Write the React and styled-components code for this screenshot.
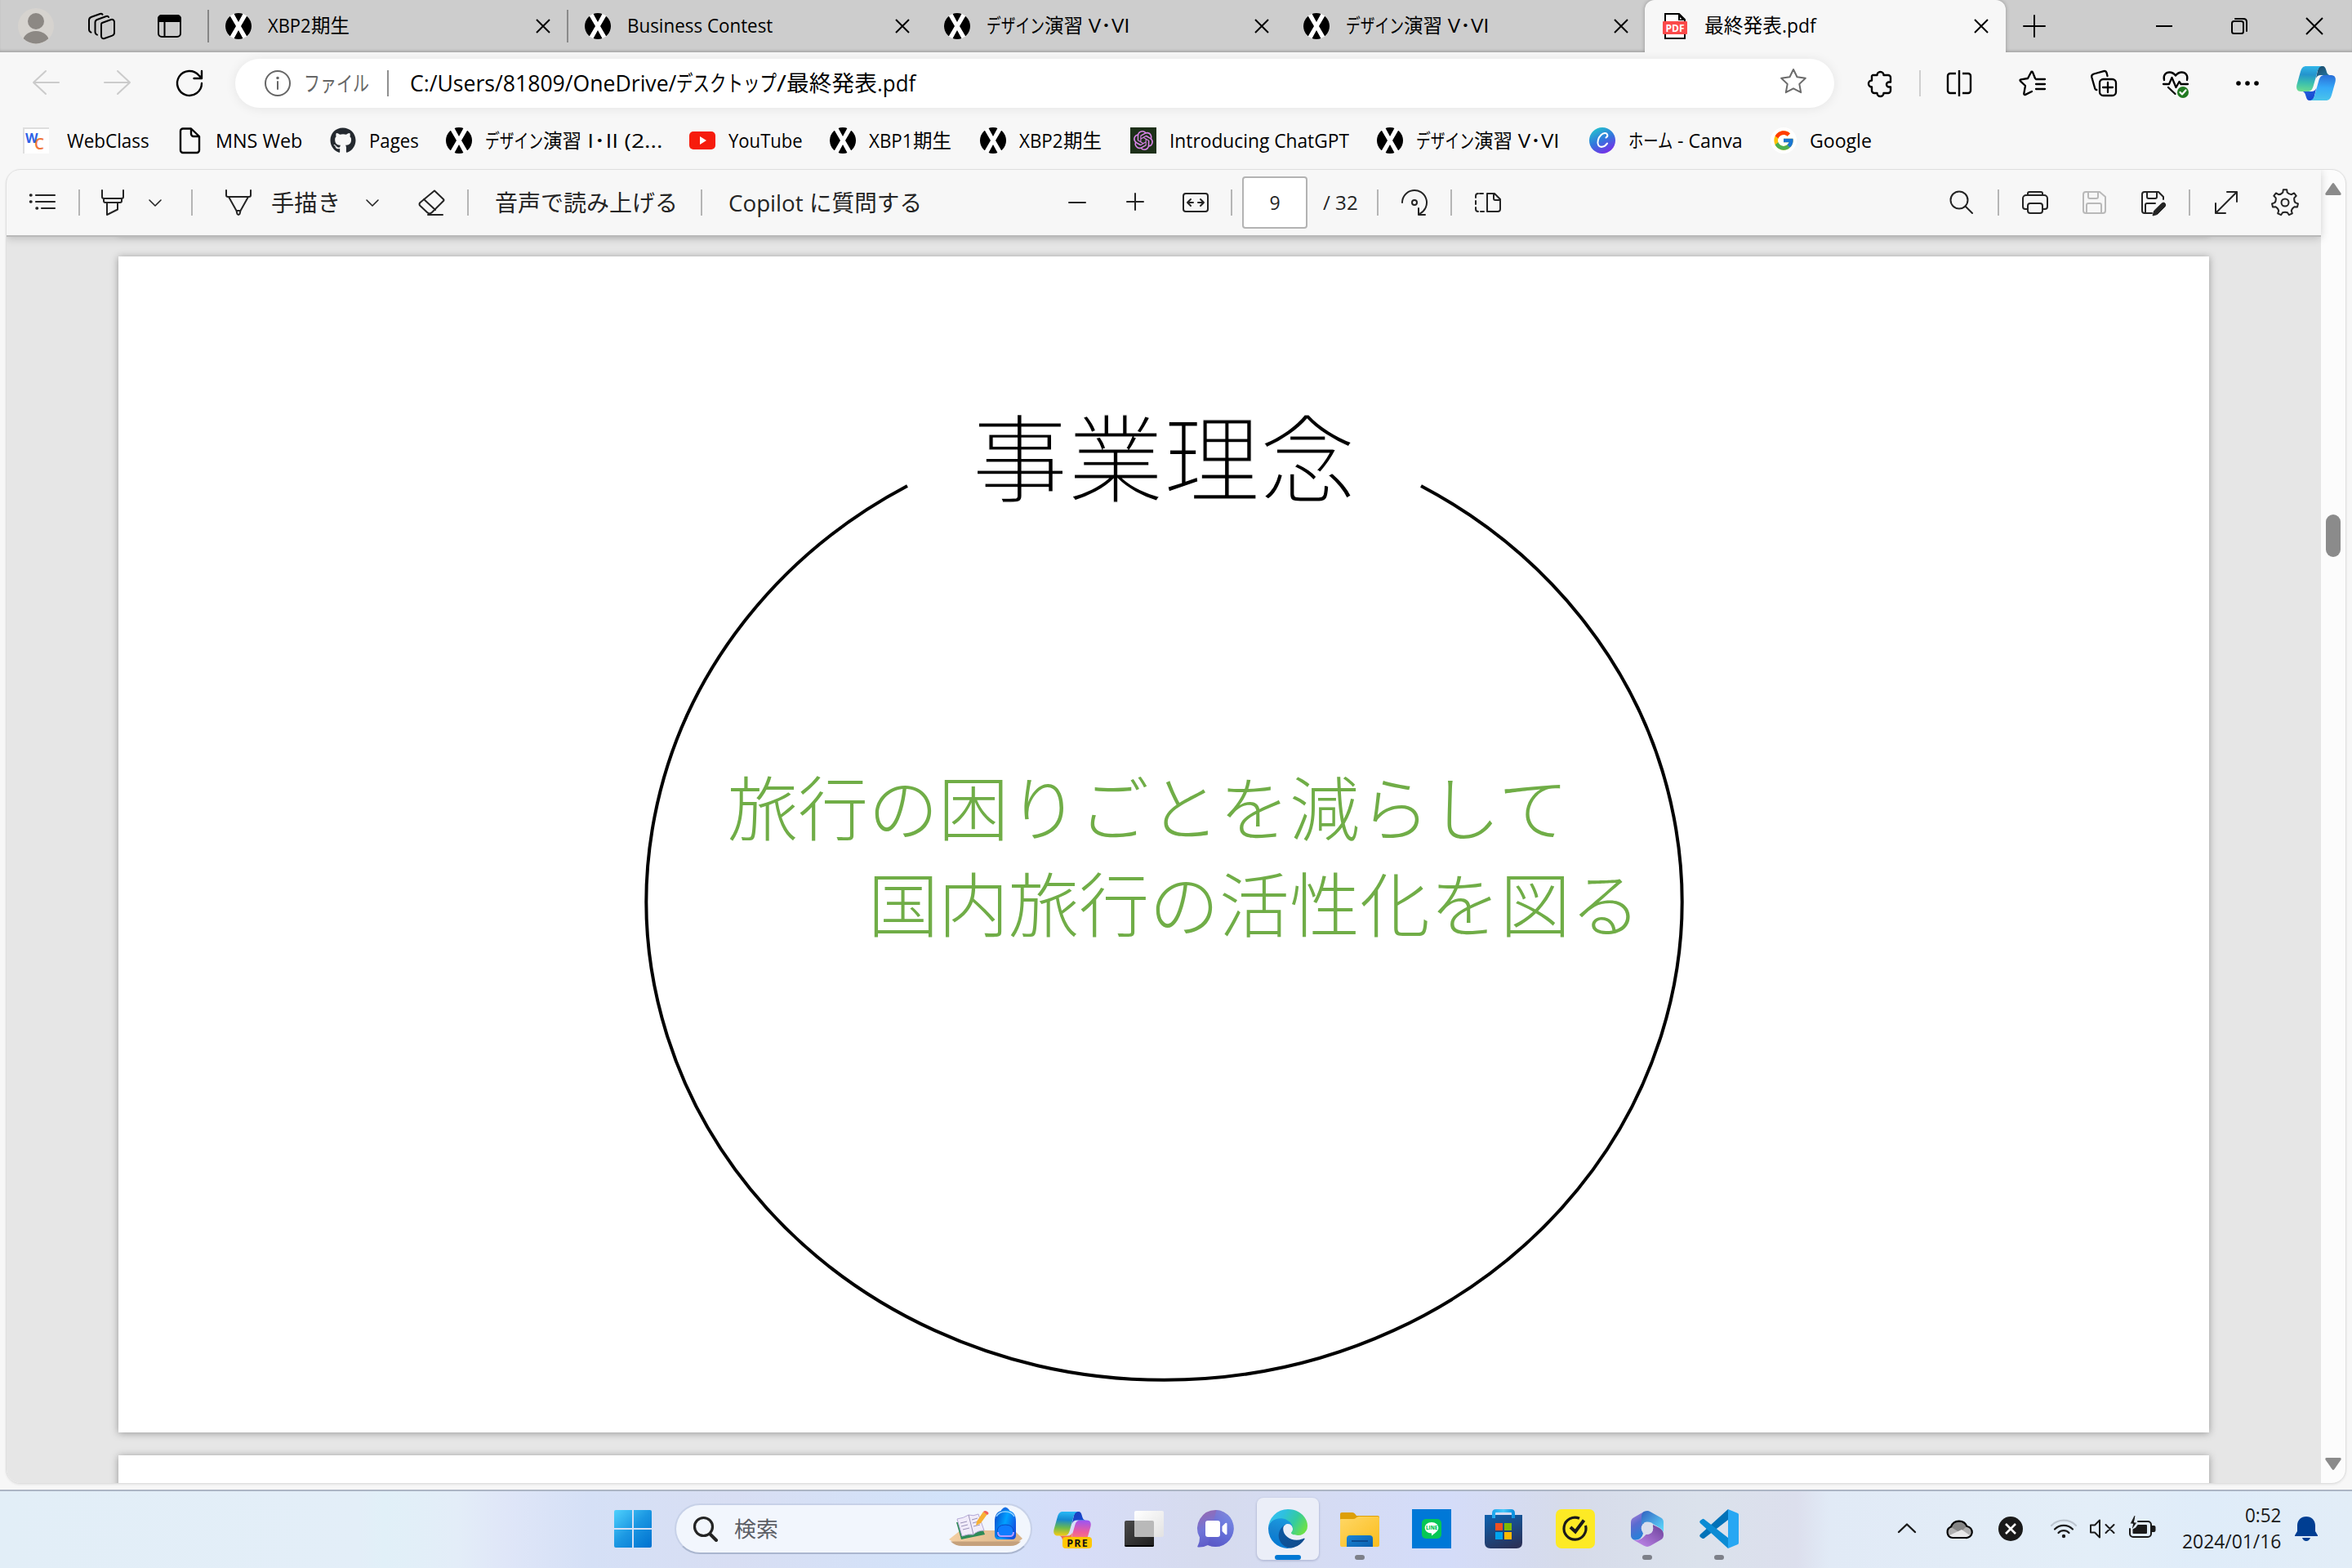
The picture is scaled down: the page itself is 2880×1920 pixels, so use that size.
import React, { useLayoutEffect, useRef, useState } from "react";
import styled, { createGlobalStyle, css } from "styled-components";
import { FaGithub } from "react-icons/fa";
import { SiOpenai } from "react-icons/si";
import { FcGoogle } from "react-icons/fc";

const Global = createGlobalStyle`
  html { height: 1920px; overflow: hidden; }
  * { box-sizing: border-box; }
  body { margin: 0; height: 1920px; background: #f7f7f7; overflow: hidden; }
`;

const uiFont = `"Open Sans", "Noto Sans CJK JP", sans-serif`;

const Screen = styled.div`
  width: 2880px;
  height: 1920px;
  display: flex;
  flex-direction: column;
  background: #f7f7f7;
  color: #000;
  font-family: ${uiFont};
  font-size: 24px;
  overflow: hidden;
`;

/* ---------- text that keeps a set width ---------- */
const TextBox = styled.span`
  display: inline-block;
  flex: none;
  width: ${(p) => p.$w}px;
  margin-left: ${(p) => p.$ml || 0}px;
  white-space: pre;
  line-height: 36px;
  font-size: ${(p) => p.$size || 24}px;
  color: ${(p) => p.$color || "inherit"};
`;
const Run = styled.span`
  display: inline-block;
  transform-origin: 0 50%;
  white-space: pre;
`;

function Fit({ w, children, ...rest }) {
  const ref = useRef(null);
  const [scale, setScale] = useState(1);
  useLayoutEffect(() => {
    const natural = ref.current.offsetWidth;
    if (natural) setScale(w / natural);
  }, [w, children]);
  return (
    <TextBox $w={w} {...rest}>
      <Run ref={ref} style={{ transform: `scaleX(${scale})` }}>{children}</Run>
    </TextBox>
  );
}

const Runs = styled.span`
  display: flex;
  flex: none;
  margin-left: ${(p) => p.$ml || 0}px;
`;
function Label({ parts, ml, size, color }) {
  return (
    <Runs $ml={ml}>
      {parts.map(([t, w], i) => (
        <Fit key={i} w={w} $size={size} $color={color}>{t}</Fit>
      ))}
    </Runs>
  );
}

/* ---------- shared pieces ---------- */
const IconBox = styled.span`
  display: flex;
  align-items: center;
  justify-content: center;
  flex: none;
  width: ${(p) => p.$w || 32}px;
  height: ${(p) => p.$h || 32}px;
  margin-left: ${(p) => p.$ml || 0}px;
  color: ${(p) => p.$color || "inherit"};
  svg { display: block; overflow: visible; }
`;
const Divider = styled.span`
  flex: none;
  width: 2px;
  height: ${(p) => p.$h || 32}px;
  margin-left: ${(p) => p.$ml || 0}px;
  background: ${(p) => p.$color || "#b5b5b5"};
`;

function Line({ w = 32, h = 32, sw = 2, children, ...rest }) {
  return (
    <svg width={w} height={h} viewBox={`0 0 ${w} ${h}`} fill="none" stroke="currentColor"
      strokeWidth={sw} strokeLinecap="round" strokeLinejoin="round" {...rest}>
      {children}
    </svg>
  );
}

const XLogo = () => (
  <svg width="32" height="32" viewBox="0 0 32 32">
    <defs><clipPath id="xc"><circle cx="16" cy="16" r="16" /></clipPath></defs>
    <g clipPath="url(#xc)">
      <rect width="32" height="32" fill="#fff" />
      <path d="M10 0h12l-6 11zM10 32h12l-6-11zM0 4h6l7 12-7 12H0zM32 4h-6l-7 12 7 12h6z" fill="#000" />
    </g>
  </svg>
);
const CloseX = ({ s = 16 }) => (
  <Line w={s} h={s} strokeLinecap="butt"><path d={`M0 0L${s} ${s}M${s} 0L0 ${s}`} /></Line>
);

/* ---------- tab strip ---------- */
const TabStrip = styled.div`
  display: flex;
  align-items: center;
  flex: none;
  height: 64px;
  background: #cdcdcd;
  box-shadow: inset 0 -3px 3px -1px rgba(0, 0, 0, 0.18);
  ${Runs} { padding-bottom: 2px; }
`;
const Tab = styled.div`
  display: flex;
  align-items: center;
  flex: none;
  width: 440px;
  height: 40px;
  padding: 0 21px 0 20px;
  border-right: 2px solid ${(p) => (p.$line ? "#8a8a8a" : "transparent")};
  ${(p) =>
    p.$active &&
    css`
      position: relative;
      width: 442px;
      height: 64px;
      margin-left: -2px;
      padding: 0 22px 0 21px;
      border: 0;
      border-radius: 12px 12px 0 0;
      background: #f7f7f7;
      box-shadow: 0 0 5px rgba(0, 0, 0, 0.28);
      clip-path: inset(0 -8px 0 -8px);
    `}
`;
const TabClose = styled(IconBox)`
  width: 16px;
  margin-left: auto;
`;
const WindowButtons = styled.div`
  display: flex;
  margin-left: auto;
`;
const WindowButton = styled.div`
  width: 92px;
  display: flex;
  align-items: center;
  justify-content: center;
  svg { overflow: visible; }
`;

const design56 = [["デザイン", 71], ["演習", 47], [" V･VI", 58]];

const PdfIcon = () => (
  <svg width="32" height="32" viewBox="0 0 32 32">
    <path d="M4 1h17l7 7v23H4z" fill="#fff" stroke="#000" strokeWidth="2" />
    <path d="M20 0l9 9h-9z" fill="#000" /><path d="M22 5l2.500 2.500H22z" fill="#fff" />
    <rect x="1" y="10" width="30" height="16" rx="1" fill="#fb4a4a" />
    <text x="16" y="22.500" textAnchor="middle" fontFamily="Open Sans, sans-serif" fontWeight="700" fontSize="12" fill="#fff">PDF</text>
  </svg>
);

function Tabs() {
  return (
    <TabStrip>
      <IconBox $w={44} $h={44} $ml={22}>
        <svg width="44" height="44" viewBox="0 0 44 44">
          <defs><clipPath id="av"><circle cx="22" cy="22" r="21.500" /></clipPath></defs>
          <circle cx="22" cy="22" r="22" fill="#d6d3cf" />
          <g clipPath="url(#av)" fill="#8c8884"><circle cx="22" cy="16" r="10" /><ellipse cx="22" cy="41" rx="16" ry="13" /></g>
        </svg>
      </IconBox>
      <IconBox $ml={42}>
        <Line>
          <path d="M17 12l11-4c2-.6 4 .4 4 3v13c0 2-.8 3-2.500 3.600L20 31c-2.400.6-4-.4-4-3V14c0-1.200.4-1.700 1-2z" />
          <path d="M25 5c-.4-1-1.500-1.400-3-1L11 8c-1.800.6-2.500 1.600-2.500 3.500V23c0 2 .8 3 2.500 3.600" />
          <path d="M17.500 1.800C17 .9 16 .7 14.500 1L4 4.800C2 5.500 1 6.600 1 8.800V20c0 2 .8 3 2.500 3.700" />
        </Line>
      </IconBox>
      <IconBox $ml={51}>
        <Line><rect x="3" y="3" width="27" height="26" rx="4" /><path d="M3 10V7a4 4 0 0 1 4-4h19a4 4 0 0 1 4 4v3z" fill="currentColor" /><path d="M10.500 10v19" /></Line>
      </IconBox>
      <Divider $h={40} $ml={31} $color="#858585" />
      <Tab $line><XLogo /><Label ml={20} parts={[["XBP2", 53], ["期生", 47]]} /><TabClose><CloseX /></TabClose></Tab>
      <Tab><XLogo /><Label ml={20} parts={[["Business Contest", 178]]} /><TabClose><CloseX /></TabClose></Tab>
      <Tab><XLogo /><Label ml={20} parts={design56} /><TabClose><CloseX /></TabClose></Tab>
      <Tab><XLogo /><Label ml={20} parts={design56} /><TabClose><CloseX /></TabClose></Tab>
      <Tab $active><PdfIcon /><Label ml={20} parts={[["最終発表", 95], [".pdf", 42]]} /><TabClose><CloseX /></TabClose></Tab>
      <IconBox $w={28} $ml={21}><Line w={28} h={28}><path d="M14 1v26M1 14h26" /></Line></IconBox>
      <WindowButtons>
        <WindowButton><Line w={22} h={22}><path d="M1 11h20" strokeLinecap="butt" /></Line></WindowButton>
        <WindowButton><Line w={20} h={20}><rect x="1" y="4" width="14" height="15" rx="2.500" /><path d="M5 1h10c2.500 0 4 1.500 4 4v11" /></Line></WindowButton>
        <WindowButton><CloseX s={20} /></WindowButton>
      </WindowButtons>
    </TabStrip>
  );
}

/* ---------- address row ---------- */
const AddressRow = styled.div`
  display: flex;
  align-items: center;
  flex: none;
  height: 76px;
`;
const AddressPill = styled.div`
  display: flex;
  align-items: center;
  flex: none;
  width: 1958px;
  height: 60px;
  margin-left: 40px;
  padding: 0 34px 0 36px;
  border-radius: 30px;
  background: #fff;
  box-shadow: 0 1px 14px rgba(0, 0, 0, 0.08);
`;
const PushRight = styled.span`
  margin-left: auto;
  color: #6b6b6b;
`;

const CopilotMark = ({ id, w = 48, h = 42, a, b, c, d }) => {
  const ribbon = "M12 0H31C27 1 26 5 25 9L20.500 25C19 29.500 17 31 13.500 31H5.500C1 31-.8 27.500.5 22.500L5 6.500C6.300 2 8.500 0 12 0z";
  const fold = "M30 0h2c2.600 0 3.600 2 4.400 5 .9 3.600 2 6 5 6H30c-3.500 0-5.500 1.600-6.500 5L25.600 7C26.600 3 27.500 0 30 0z";
  return (
    <svg width={w} height={h} viewBox="0 0 48 42">
      <defs>
        {[a, b, c, d].map((stops, i) => (
          <linearGradient key={i} id={id + i} x1="0.35" y1="0" x2={i > 1 ? "1" : "0.3"} y2="1">
            {stops.map((s, n) => <stop key={n} offset={n / (stops.length - 1)} stopColor={s} />)}
          </linearGradient>
        ))}
      </defs>
      <g transform="rotate(180 24 21)"><path d={fold} fill={`url(#${id}3)`} /><path d={ribbon} fill={`url(#${id}1)`} /></g>
      <path d={fold} fill={`url(#${id}2)`} /><path d={ribbon} fill={`url(#${id}0)`} />
    </svg>
  );
};

const kana = "デスクトップ";

function Address() {
  return (
    <AddressRow>
      <IconBox $ml={40} $color="#cbcbcb"><Line><path d="M32 15H1M16 1L1 15l15 14" /></Line></IconBox>
      <IconBox $ml={56} $color="#cbcbcb"><Line><path d="M0 15h31M16 1l15 14-15 14" /></Line></IconBox>
      <IconBox $ml={56}><Line sw={2.400}><path d="M31 16a15 15 0 1 1-3.500-9.700L31 9.500M31 1v9h-9.500" /></Line></IconBox>
      <AddressPill>
        <IconBox $color="#666"><Line><circle cx="16" cy="16" r="15" /><path d="M16 14v9" /><circle cx="16" cy="9.500" r=".8" fill="currentColor" /></Line></IconBox>
        <Label ml={16} color="#666" parts={[["ファイル", 80]]} size={26} />
        <Divider $ml={22} $color="#8f8f8f" />
        <Label ml={26} size={27} parts={[["C:/Users/81809/OneDrive/", 326], [kana, 123], ["/", 12], ["最終発表", 111], [".pdf", 47]]} />
        <PushRight>
          <Line><path d="M16 2l4.500 9.300 10.300 1.400-7.500 7.200 1.900 10.300L16 25.300l-9.200 4.900 1.900-10.300L1.200 12.700l10.300-1.400z" /></Line>
        </PushRight>
      </AddressPill>
      <IconBox $ml={40}>
        <Line sw={2.400}><path d="M7 6h5.500a4 4 0 1 1 8 0H26a3 3 0 0 1 3 3v5.500h-2a3 3 0 0 0 0 6h2V25a3 3 0 0 1-3 3h-5.500a4 4 0 1 1-8 0H9a3 3 0 0 1-3-3v-4.500a4 4 0 1 1 0-8V7z" /></Line>
      </IconBox>
      <Divider $ml={32} $color="#cfcfcf" />
      <IconBox $ml={31}><Line sw={2.400} strokeLinecap="butt"><path d="M16 0v32M12 4H5a3 3 0 0 0-3 3v18a3 3 0 0 0 3 3h7M20 4h7a3 3 0 0 1 3 3v18a3 3 0 0 1-3 3h-7" /></Line></IconBox>
      <IconBox $ml={57}><Line sw={2.300}><path d="M20 10l-3-7.500c-.5-1-1.600-1-2 0L11 10 2.500 11.300c-1 .3-1.500 1.300-.5 2L8 19 6.300 28.500c-.2 1.300.7 2 1.800 1.400L16 26M21 11h11M21 17h11M21 23h11" /></Line></IconBox>
      <IconBox $ml={56}><Line sw={2.300}><rect x="11" y="11" width="20" height="20" rx="4.500" /><path d="M21 15v12M15 21h12M20.500 7l-1-4c-.6-1.700-1.800-2.300-3.500-1.800L4 4.500C1.800 5.200.8 6.500 1.300 8.500l4 14c.3 1 .9 1.600 2 1.500" /></Line></IconBox>
      <IconBox $ml={56}>
        <Line sw={2.300}>
          <path d="M2 12C.5 6 4 2.500 8.500 2.500c3 0 5.500 1.500 7.500 4 2-2.500 4.500-4 7.500-4 4.500 0 8 3.500 6.500 9.500M1 17h7l3.500-8 5 12 4-7 2 3H31M7 21l8.500 8" />
          <circle cx="25" cy="27" r="7" fill="#217a21" stroke="none" /><path d="M21.500 27l2.500 2.500 4.500-5" stroke="#fff" />
        </Line>
      </IconBox>
      <IconBox $ml={56}><svg width="28" height="6"><circle cx="3" cy="3" r="2.800" /><circle cx="14" cy="3" r="2.800" /><circle cx="25" cy="3" r="2.800" /></svg></IconBox>
      <IconBox $w={48} $h={42} $ml={44}>
        <CopilotMark id="cpa" a={["#31b5e8", "#2494cd", "#3bbfae", "#6cdc8f"]} b={["#4ac4ea", "#35a9f8", "#2a6fd8"]} c={["#1d4f70", "#247fae"]} d={["#1546d0", "#2a6ae0"]} />
      </IconBox>
    </AddressRow>
  );
}

/* ---------- bookmarks ---------- */
const BookmarkBar = styled.div`
  display: flex;
  align-items: center;
  gap: 33px;
  flex: none;
  height: 67px;
  padding: 0 0 3px 28px;
  ${Runs} { padding-bottom: 1px; }
`;
const Bookmark = styled.div`
  display: flex;
  align-items: center;
  flex: none;
  margin-left: ${(p) => p.$shift || 0}px;
`;

const WebClassIcon = () => (
  <svg width="32" height="32" viewBox="0 0 32 32">
    <rect width="32" height="32" fill="#fff" /><path d="M0 0h32v2H2v30H0z" fill="#dedede" />
    <text x="3" y="19" fontFamily="Open Sans, sans-serif" fontWeight="700" fontSize="16" fill="#2f63e6">W</text>
    <text x="14" y="27" fontFamily="Open Sans, sans-serif" fontWeight="600" fontSize="19" fill="#f0773a">C</text>
  </svg>
);
const YouTubeIcon = () => (
  <svg width="32" height="32" viewBox="0 0 32 32"><rect y="5" width="32" height="22" rx="5" fill="#f61c0d" /><path d="M13 11v10l8-5z" fill="#fff" /></svg>
);
const GptIcon = () => (
  <svg width="32" height="32" viewBox="0 0 32 32"><rect width="32" height="32" fill="#1d3019" /><g transform="translate(4 4)" color="#d983e8"><SiOpenai size={24} /></g></svg>
);
const CanvaIcon = () => (
  <svg width="32" height="32" viewBox="0 0 32 32">
    <defs><linearGradient id="cv" x1="0.2" y1="0" x2="0.7" y2="1"><stop stopColor="#22c6cc" /><stop offset=".5" stopColor="#3277dd" /><stop offset="1" stopColor="#7a2be8" /></linearGradient></defs>
    <circle cx="16" cy="16" r="16" fill="url(#cv)" />
    <path d="M20.500 12.500c1.500-.7 2.200-2.400 1.500-4-1-2-4.500-2-7.500.8-3.600 3.400-5 9-3.400 12.300 1.700 3.500 7.400 3 10.900-2" fill="none" stroke="#fff" strokeWidth="2" strokeLinecap="round" />
  </svg>
);
const GoogleIcon = () => (
  <svg width="32" height="32" viewBox="0 0 32 32"><circle cx="16" cy="16" r="16" fill="#fff" /><g transform="translate(2 2)"><FcGoogle size={28} /></g></svg>
);
const FileIcon = () => (
  <Line sw={2.400}><path d="M8 1.500h10L28 11v17a3 3 0 0 1-3 3H8a3 3 0 0 1-3-3V4.500a3 3 0 0 1 3-3zM18 2v6a3 3 0 0 0 3 3h6" /></Line>
);

const bookmarks = [
  [WebClassIcon, [["WebClass", 101]], 22],
  [FileIcon, [["MNS Web", 106]], 16],
  [() => <FaGithub size={32} color="#24292f" />, [["Pages", 61]], 16, 1],
  [XLogo, [["デザイン", 71], ["演習", 47], [" I･II (2...", 99]], 16],
  [YouTubeIcon, [["YouTube", 91]], 16],
  [XLogo, [["XBP1", 54], ["期生", 47]], 16],
  [XLogo, [["XBP2", 54], ["期生", 47]], 16, 2],
  [GptIcon, [["Introducing ChatGPT", 220]], 16, 2],
  [XLogo, design56, 16, 1],
  [CanvaIcon, [["ホーム", 54], [" - Canva", 86]], 16, 3],
  [GoogleIcon, [["Google", 76]], 16, 1],
];

const Bookmarks = () => (
  <BookmarkBar>
    {bookmarks.map(([Icon, parts, gap, shift], i) => (
      <Bookmark key={i} $shift={shift}><IconBox><Icon /></IconBox><Label ml={gap} parts={parts} /></Bookmark>
    ))}
  </BookmarkBar>
);

/* ---------- PDF viewer ---------- */
const Viewer = styled.div`
  display: flex;
  flex: none;
  width: 2866px;
  height: 1610px;
  margin-left: 7px;
  border: 1px solid #dfdfdf;
  border-radius: 18px;
  overflow: hidden;
  background: #fcfcfc;
  box-shadow: 0 1px 3px rgba(0, 0, 0, 0.08);
`;
const ViewerMain = styled.div`
  display: flex;
  flex-direction: column;
  width: 2834px;
  background: #e6e6e6;
`;
const PdfBar = styled.div`
  position: relative;
  display: flex;
  align-items: center;
  flex: none;
  height: 82px;
  color: #242424;
  background: #f7f7f7;
  border-bottom: 2px solid #b9b9b9;
  box-shadow: 0 2px 10px rgba(0, 0, 0, 0.18);
`;
const PageInput = styled.div`
  display: flex;
  align-items: center;
  justify-content: center;
  flex: none;
  width: 80px;
  height: 64px;
  margin-left: 12px;
  border: 2px solid #b3b3b3;
  border-radius: 4px;
  background: #fff;
  font-size: 23px;
`;
const Pages = styled.div`
  display: flex;
  flex-direction: column;
  gap: 28px;
  flex: 1;
  min-height: 0;
  padding-left: 137px;
  overflow: hidden;
`;
const Page = styled.section`
  position: relative;
  flex: none;
  width: 2560px;
  height: 1440px;
  padding-top: 161px;
  background: #fff;
  box-shadow: 0 1px 9px rgba(0, 0, 0, 0.35);
`;
const PageEdge = styled.div`
  flex: none;
  width: 2560px;
  height: 4px;
  margin-top: -8px;
  background: #fff;
  box-shadow: 0 1px 9px rgba(0, 0, 0, 0.35);
`;
const Arc = styled.svg`
  position: absolute;
  inset: 0;
`;
const SlideTitle = styled.h1`
  position: relative;
  margin: 0;
  text-align: center;
  font: 300 117.500px/160px "Noto Sans CJK JP", sans-serif;
  color: #000;
  -webkit-text-stroke: 1.200px #fff;
`;
const Statement = styled.p`
  position: relative;
  margin: 0;
  padding: 292px 0 0 746px;
  font: 300 86px/118px "Noto Sans CJK JP", sans-serif;
  color: #70ad47;
  white-space: pre;
`;
const ScrollBar = styled.div`
  display: flex;
  flex-direction: column;
  align-items: center;
  flex: 1;
  padding: 16px 0 16px;
  margin-right: 1px;
`;
const Thumb = styled.div`
  width: 18px;
  height: 52px;
  margin: 391px 0 auto;
  border-radius: 9px;
  background: #8b8b8b;
`;
const Arrow = styled.svg`
  display: block;
  width: 20px;
  height: 15px;
  fill: #8b8b8b;
  transform: ${(p) => (p.$down ? "rotate(180deg)" : "none")};
`;
const ScrollArrow = (p) => <Arrow viewBox="0 0 20 15" {...p}><path d="M8.600 1q1.400-2 2.800 0l8 11.500q1 2.500-1.400 2.500H2q-2.400 0-1.400-2.500z" /></Arrow>;

const Chevron = ({ ml }) => <IconBox $w={16} $ml={ml}><Line w={16} h={9} sw={1.600}><path d="M1 1l7 7 7-7" /></Line></IconBox>;
const Disk = ({ pen }) => (
  <Line>
    <path d={pen ? "M15 29H6a3 3 0 0 1-3-3V6a3 3 0 0 1 3-3h17l6 6v3" : "M6 3h17l7 6v17a3 3 0 0 1-3 3H6a3 3 0 0 1-3-3V6a3 3 0 0 1 3-3z"} />
    <path d={pen ? "M9 3v6a2 2 0 0 0 2 2h8a2 2 0 0 0 2-2V3M7 29V19a2 2 0 0 1 2-2h10" : "M9 3v6a2 2 0 0 0 2 2h8a2 2 0 0 0 2-2V3M7 29V19a2 2 0 0 1 2-2h14a2 2 0 0 1 2 2v10"} />
    {pen && <path d="M27 17q2.500-2 4 0t0 4L21.500 30.500 16 32l1.500-5.500z" fill="currentColor" strokeWidth="1" />}
  </Line>
);
const Gear = () => {
  const pts = [];
  const n = 7;
  for (let i = 0; i < n; i++) {
    const at = (r, o) => {
      const t = ((i + o) / n) * Math.PI * 2 - Math.PI / 2;
      return `${(18 + r * Math.cos(t)).toFixed(2)} ${(17 + r * Math.sin(t)).toFixed(2)}`;
    };
    pts.push(`${i ? "L" : "M"}${at(16, -0.15)}L${at(16, 0.15)}L${at(12.6, 0.24)}Q${at(11, 0.5)} ${at(12.6, 0.76)}`);
  }
  return <Line w={36} h={34}><path d={pts.join("") + "z"} /><circle cx="18" cy="17" r="4.500" /></Line>;
};

function PdfToolbar() {
  return (
    <PdfBar>
      <IconBox $ml={28}><Line sw={2.200}><path d="M8 7h23M8 15h23M15 23h16" /><path d="M1.500 7h.5M1.500 15h.5M9 23h.5" strokeWidth="3.500" /></Line></IconBox>
      <Divider $ml={28} />
      <IconBox $ml={24}><Line><path d="M3 1v8a2 2 0 0 0 2 2h22a2 2 0 0 0 2-2V1M5 11v3a2 2 0 0 0 2 2h18a2 2 0 0 0 2-2v-3M9 16v15l13-6.500V16" /></Line></IconBox>
      <Chevron ml={28} />
      <Divider $ml={36} />
      <IconBox $ml={40}><Line><path d="M1 1v6a2 2 0 0 0 2 2h26a2 2 0 0 0 2-2V1M4 9l9.500 17h5L28 9M13.500 26l1 4q1.500 2 3 0l1-4" /></Line></IconBox>
      <Label ml={24} size={28} parts={[["手描き", 85]]} />
      <Chevron ml={31} />
      <IconBox $ml={48}><Line><path d="M20 1.500L31 12q1 1 0 2L17 28q-3 3-6 0l-8.500-8q-2-2 0-4zM7 12l14 13M12 31h18" /></Line></IconBox>
      <Divider $ml={28} />
      <Label ml={32} size={28} parts={[["音声で読み上げる", 224]]} />
      <Divider $ml={28} />
      <Label ml={32} size={28} parts={[["Copilot ", 99], ["に質問する", 138]]} />
      <IconBox $w={22} $ml={179}><Line w={22} h={22}><path d="M1 11h20" /></Line></IconBox>
      <IconBox $w={22} $ml={49}><Line w={22} h={22}><path d="M1 10h20M11 0v20" /></Line></IconBox>
      <IconBox $ml={47}><Line><rect x="1" y="5" width="30" height="22" rx="3" /><path d="M13 16H6M10 12l-4 4 4 4M19 16h7M22 12l4 4-4 4" /></Line></IconBox>
      <Divider $ml={27} />
      <PageInput>9</PageInput>
      <Label ml={19} size={23} parts={[["/ 32", 43]]} />
      <Divider $ml={23} />
      <IconBox $ml={28}><Line><path d="M1 16a15 15 0 1 1 22 13.300M21 23v8h8" /><circle cx="16" cy="16" r="3" /></Line></IconBox>
      <Divider $ml={28} />
      <IconBox $ml={28}><Line><path d="M15 5h9l7 7v12a3 3 0 0 1-3 3H15zM23 5v6a2 2 0 0 0 2 2h6" /><path d="M10 5H6M1 10V8a3 3 0 0 1 3-3M1 14v4M1 22v2a3 3 0 0 0 3 3M7 27h4" /></Line></IconBox>
      <IconBox $ml={548}><Line><circle cx="13" cy="13" r="10.500" /><path d="M20.500 20.500L29 29" /></Line></IconBox>
      <Divider $ml={28} />
      <IconBox $ml={28}><Line><path d="M7 24H4a3 3 0 0 1-3-3V11a4 4 0 0 1 4-4h22a4 4 0 0 1 4 4v10a3 3 0 0 1-3 3h-3M7 7V5a2 2 0 0 1 2-2h14a2 2 0 0 1 2 2v2" /><rect x="7" y="17" width="18" height="12" rx="3" /></Line></IconBox>
      <IconBox $ml={40} $color="#b9b9b9"><Disk /></IconBox>
      <IconBox $ml={40}><Disk pen /></IconBox>
      <Divider $ml={28} />
      <IconBox $ml={28}><Line><path d="M3 29L29 3M17 3h12v12M3 17v12h12" /></Line></IconBox>
      <IconBox $w={36} $h={34} $ml={38}><Gear /></IconBox>
    </PdfBar>
  );
}

const PdfViewer = () => (
  <Viewer>
    <ViewerMain>
      <PdfToolbar />
      <Pages>
        <PageEdge />
        <Page>
          <Arc width="2560" height="1440" viewBox="145 314 2560 1440">
            <path d="M1111 595A634 586 0 1 0 1740 595" fill="none" stroke="#000" strokeWidth="4" />
          </Arc>
          <SlideTitle>事業理念</SlideTitle>
          <Statement>{"旅行の困りごとを減らして\n　　国内旅行の活性化を図る"}</Statement>
        </Page>
        <Page />
      </Pages>
    </ViewerMain>
    <ScrollBar><ScrollArrow /><Thumb /><ScrollArrow $down /></ScrollBar>
  </Viewer>
);

/* ---------- taskbar ---------- */
const TaskBar = styled.div`
  display: flex;
  align-items: center;
  flex: none;
  height: 96px;
  margin-top: 7px;
  padding-bottom: 2px;
  border-top: 2px solid #acb5c4;
  color: #1a1a1a;
  background: linear-gradient(90deg, #e2eef7 0, #e3eef8 440px, #e1f0f8 470px, #e3edf8 560px, #dfe6f8 620px, #d5e0f6 720px, #d8def3 900px,
    #d2e3fa 1170px, #d7ddf8 1310px, #d6dbee 1480px, #d4dcf9 1770px, #d6dbea 1920px, #dbe2ec 2080px, #dcdfed 2200px, #e1eaf6 2240px, #e3eef8 2560px, #dfecf9 2700px, #e2edf7 2880px);
`;
const SearchBox = styled.div`
  display: flex;
  align-items: center;
  flex: none;
  width: 438px;
  height: 62px;
  margin: 0 11px 0 28px;
  padding: 0 10px 0 20px;
  border: 2px solid #c7d1e8;
  border-bottom-color: #aab6cf;
  border-radius: 31px;
  background: #f2f6fd;
`;
const TaskButton = styled.div`
  position: relative;
  display: flex;
  align-items: center;
  justify-content: center;
  flex: none;
  width: 76px;
  height: 76px;
  margin-right: 12px;
  border-radius: 8px;
  background: ${(p) => (p.$active ? "#ebeef8" : "transparent")};
  box-shadow: ${(p) => (p.$active ? "0 1px 2px 1px rgba(90,100,140,.22)" : "none")};
  svg { overflow: visible; }
`;
const Indicator = styled.span`
  position: absolute;
  bottom: 0;
  left: 50%;
  width: ${(p) => (p.$active ? 32 : 12)}px;
  height: 6px;
  transform: translateX(-50%);
  border-radius: 3px;
  background: ${(p) => (p.$active ? "#0078d4" : "#7d8089")};
`;
const Clock = styled.div`
  display: flex;
  flex-direction: column;
  align-items: flex-end;
  flex: none;
  margin-left: 30px;
  padding-bottom: 2px;
  span { line-height: 32px; }
`;

const Grad = ({ id, stops, x1 = 0, y1 = 0, x2 = 1, y2 = 1 }) => (
  <linearGradient id={id} x1={x1} y1={y1} x2={x2} y2={y2}>
    {stops.map((s, n) => <stop key={n} offset={n / (stops.length - 1)} stopColor={s} />)}
  </linearGradient>
);
const App48 = ({ children, vb = "0 0 48 48" }) => <svg width="48" height="48" viewBox={vb}>{children}</svg>;

const StartIcon = () => (
  <svg width="46" height="46" viewBox="0 0 46 46">
    <defs>
      <linearGradient id="st" gradientUnits="userSpaceOnUse" x1="0" y1="0" x2="44" y2="46"><stop stopColor="#4fd1fd" /><stop offset=".5" stopColor="#1b97e2" /><stop offset="1" stopColor="#0072d0" /></linearGradient>
    </defs>
    <path d="M2 0h20v22H0V2q0-2 2-2zM24 0h20q2 0 2 2v20H24zM0 24h22v22H2q-2 0-2-2zM24 24h22v20q0 2-2 2H24z" fill="url(#st)" />
  </svg>
);
const DeskArt = () => (
  <svg width="90" height="48" viewBox="0 0 90 48">
    <defs><Grad id="bp" stops={["#0a4fd0", "#00a2ff", "#1450e0"]} x1={0} x2={1} y1={0.2} y2={0.6} /><Grad id="tb" stops={["#f3cfa2", "#d9b388"]} y2={0} /></defs>
    <path d="M0 40L14 29h66l10 10-5 4H5z" fill="url(#tb)" /><path d="M2 42.500h86q-5 5.500-13 5.500H16q-8 0-14-5.500z" fill="#c5a17c" />
    <path d="M9 19l6 21 29-6-2-5-26 4-5-14z" fill="#2e8b57" />
    <path d="M10 15q8-1 14-5 6 2 12-1l7 20q-8 0-13 5-6-1-14 2z" fill="#f1ecfa" stroke="#b5a9d6" strokeWidth="1" />
    <path d="M24 10l6 24M14 20l8-2M15 24l8-2M17 28l8-2M28 16l7-2M29 20l7-2M30 24l8-2" stroke="#9a92b8" strokeWidth="1" />
    <path d="M34 18l8-12 5 3-8 11-6 3z" fill="#f7b035" /><path d="M42 6q2-2 5 0t0 4z" fill="#f2605a" />
    <path d="M64 4q5-7 10 0v4H64z" fill="#1570e6" /><path d="M56 18q0-14 13-14t13 14v17q0 5-5 5H61q-5 0-5-5z" fill="url(#bp)" />
    <path d="M58 12q3-6 11-6t11 6" fill="none" stroke="#8fd0ff" strokeWidth="1.500" /><path d="M59 31q0-9 10-9t10 9v3q0 3-3 3H62q-3 0-3-3z" fill="#0e7cff" stroke="#0a49c4" /><path d="M60 31q0 5 4 5h11q4 0 4-5" fill="none" stroke="#b39cff" strokeWidth="2" />
  </svg>
);
const CopilotPre = () => (
  <App48>
    <g transform="translate(1 3)">
      <CopilotMark id="cpb" w={46} h={40} a={["#28b8f5", "#1688d0", "#6cba4c", "#f7cb15"]} b={["#ff9460", "#ee5d9b", "#9a55f5"]} c={["#1a3fc0", "#1650d8"]} d={["#f58a3a", "#f05a5a"]} />
    </g>
    <rect x="12" y="34" width="36" height="14" rx="4" fill="#ffc800" />
    <text x="30.500" y="45.500" textAnchor="middle" fontFamily="Open Sans, sans-serif" fontWeight="700" fontSize="12.500" letterSpacing="1.200" fill="#111">PRE</text>
  </App48>
);
const TaskViewIcon = () => (
  <App48><defs><Grad id="tv" stops={["#4a4a4a", "#1e1e1e"]} /><Grad id="tw" stops={["#fff", "#e2e2e2"]} /></defs>
    <rect y="14" width="36" height="32" rx="2" fill="url(#tv)" /><path d="M0 44h36q0 2-2 2H2q-2 0-2-2z" fill="#000" /><rect x="12" y="2" width="36" height="32" rx="2" fill="url(#tw)" /><path d="M12 14h22q2 0 2 2v18H14q-2 0-2-2z" fill="#b9b9b9" />
  </App48>
);
const ChatIcon = () => (
  <App48><defs><Grad id="ch" stops={["#9a6ab0", "#6f74d8", "#5a55c4"]} x1={0.1} x2={0.5} /><Grad id="ci" stops={["#86a5ef", "#6576e0", "#5552c0"]} x1={1} x2={0} /></defs>
    <path d="M24.500 1A22.500 22.500 0 1 1 14 44Q8 47 2 46.500 .5 46 2 44 4 40 4 34.500A22.500 22.500 0 0 1 24.500 1z" fill="url(#ch)" /><path d="M24.500 1A22.500 22.500 0 1 1 14 44Z" fill="url(#ci)" opacity=".55" />
    <rect x="11" y="14" width="18" height="20" rx="3" fill="#fff" /><path d="M31.500 21l4-4q2-1 2 1v12q0 2-2 1l-4-4z" fill="#fff" />
  </App48>
);
const EdgeIcon = () => (
  <App48 vb="0 0 256 256">
    <defs><Grad id="e1" stops={["#0c59a4", "#114a8b"]} /><Grad id="e2" stops={["#1b9de2", "#1683d0", "#0078d4"]} x1={0.6} x2={0.4} /><Grad id="e3" stops={["#35c1f1", "#2fc0df", "#34cba0", "#6be04a"]} y1={0.2} y2={0.6} /></defs>
    <path d="M231 190.500c-3.400 1.800-6.900 3.400-10.500 4.700a101 101 0 0 1-35.600 6.400c-47 0-87.900-32.300-87.900-73.800a31.500 31.500 0 0 1 16.400-27.300c-42.500 1.800-53.400 46.100-53.400 72 0 73.500 67.700 80.900 82.300 80.900 7.900 0 19.700-2.300 26.900-4.500l1.300-.4a128.300 128.300 0 0 0 66.600-52.800 4 4 0 0 0-6.100-5.200z" fill="url(#e1)" />
    <path d="M105.700 241.500a79 79 0 0 1-22.700-21.300 80.700 80.700 0 0 1 29.500-120c3.100-1.500 8.500-4.100 15.600-4a32.400 32.400 0 0 1 25.700 13 31.900 31.900 0 0 1 6.300 18.700c0-.2 24.500-79.600-80-79.600C36.200 48.300 0 90 0 126.500a130.200 130.200 0 0 0 12.100 56 128 128 0 0 0 156.400 67 75.600 75.600 0 0 1-62.800-8z" fill="url(#e2)" />
    <path d="M152.300 148.900c-.8 1-3.300 2.500-3.300 5.700 0 2.600 1.700 5.100 4.700 7.200 14.400 10 41.500 8.700 41.600 8.700a59.600 59.600 0 0 0 30.300-8.300 61.400 61.400 0 0 0 30.400-52.900c.3-22.400-8-37.300-11.300-43.900C223.500 24.200 177.700 0 128 0A128 128 0 0 0 0 126.200c.5-36.500 36.800-66 80-66 3.500 0 23.500.3 42 10a72.600 72.600 0 0 1 30.900 29.300c6.100 10.600 7.200 24.100 7.200 29.500s-2.700 13.300-7.800 19.900z" fill="url(#e3)" />
  </App48>
);
const ExplorerIcon = () => (
  <App48><defs><Grad id="fx" stops={["#ffd766", "#fbbd1c"]} /><Grad id="fy" stops={["#1a86d6", "#0a5fae"]} /></defs>
    <path d="M0 6q0-2 2-2h13q2 0 3 1.500L20 8h26q2 0 2 2v6H0z" fill="#dd9f08" />
    <path d="M0 13q0-1 1-1h15q2 0 3.500-1.500T23 9h23q2 0 2 2v33q0 2-2 2H2q-2 0-2-2z" fill="url(#fx)" />
    <path d="M8 46V36q0-4 4-4h24q4 0 4 4v10z" fill="url(#fy)" /><path d="M14 39h20" stroke="#0a4c92" strokeWidth="2" />
  </App48>
);
const LineIcon = () => (
  <App48><rect width="48" height="48" fill="#0078d7" /><rect x="12" y="12" width="24" height="24" rx="5" fill="#06c755" /><path d="M24 16c5 0 8.300 3 8.300 6.800 0 3.400-3 5.700-8.300 9.700v-3c-5 0-8.300-3-8.300-6.700S19 16 24 16z" fill="#fff" />
    <text x="24" y="25" textAnchor="middle" fontFamily="Open Sans, sans-serif" fontWeight="800" fontSize="6" fill="#06c755">LINE</text>
  </App48>
);
const StoreIcon = () => (
  <App48><defs><Grad id="ms" stops={["#0f5ea8", "#2a3158"]} x1={0.3} x2={0.7} /><Grad id="mh" stops={["#1fa8ee", "#48c8fa", "#0a92e0"]} y2={0} /></defs>
    <path d="M1 7h46v34q0 7-7 7H8q-7 0-7-7z" fill="url(#ms)" /><path d="M12 11V5q0-3 3-3h18q3 0 3 3v6" fill="none" stroke="url(#mh)" strokeWidth="4" />
    <path d="M14 17h9v9h-9z" fill="#f25022" /><path d="M25 17h9v9h-9z" fill="#7fba00" /><path d="M14 28h9v9h-9z" fill="#00a4ef" /><path d="M25 28h9v9h-9z" fill="#ffb900" />
  </App48>
);
const NortonIcon = () => (
  <App48><rect width="48" height="48" rx="7" fill="#fdea25" /><path d="M29 11.300A13.500 13.500 0 1 0 36.500 20" fill="none" stroke="#1a1a1a" strokeWidth="3.200" /><path d="M18 22l6 5.500 10.500-14" fill="none" stroke="#1a1a1a" strokeWidth="4" /></App48>
);
const M365Icon = () => (
  <App48><defs><Grad id="m1" stops={["#b583d8", "#5a6bd0", "#2a7fd8"]} x2={0.3} /><Grad id="m2" stops={["#2f62c0", "#4aa0e0", "#5fe0ff"]} /><Grad id="m3" stops={["#6a3f98", "#c58cf0"]} x1={1} x2={0} /></defs>
    <path d="M20 3L7 10.500Q4 12.300 4 16v16q0 3.500 3 5.200l2 .6q8 0 10-8l-2-6q0-4 3-6.500z" fill="url(#m1)" />
    <path d="M24 2q2 0 4 1.200l13 7.300q3 1.800 3 5.500v12q-2-4-6-6l-7-4q-1.500-2.500-7-2.500-4 0-7 4V9q0-5 4-6.500 1.500-.5 3-.5z" fill="url(#m2)" />
    <path d="M31 19l7 3.500q6 3 6 9 0 4-3 5.700L28 44.800q-4 2.200-8 0L7 37.500q7 1.500 12-3l3.500-3.500q8.500 0 8.500-7z" fill="url(#m3)" />
    <circle cx="24" cy="23.500" r="7.300" fill="#d9deec" />
  </App48>
);
const CodeIcon = () => (
  <App48>
    <path d="M35 0v13L6 35.500q-1.500 1.200-3 0L.8 34q-1.300-1.500 0-3z" fill="#0272b8" />
    <path d="M.8 17q-1.300-1.500 0-3L3 12.400q1.500-1.200 3 0L35 35v13z" fill="#0b8bd4" />
    <path d="M35 0l12 5q1 .5 1 2v34q0 1.500-1 2L35 48z" fill="#27a7f3" />
  </App48>
);

const pinned = [
  { icon: CopilotPre }, { icon: TaskViewIcon }, { icon: ChatIcon }, { icon: EdgeIcon, state: "active" }, { icon: ExplorerIcon, state: "open" },
  { icon: LineIcon }, { icon: StoreIcon }, { icon: NortonIcon }, { icon: M365Icon, state: "open" }, { icon: CodeIcon, state: "open" },
];

const Taskbar = () => (
  <TaskBar>
    <IconBox $w={46} $h={46} $ml={752}><StartIcon /></IconBox>
    <SearchBox>
      <Line sw={3.200} color="#242424"><circle cx="13.500" cy="13.500" r="11" /><path d="M21.500 22.500l7.500 7.500" strokeWidth="4" /></Line>
      <Label ml={19} size={26} color="#5c5f66" parts={[["検索", 54]]} />
      <PushRight><DeskArt /></PushRight>
    </SearchBox>
    {pinned.map(({ icon: Icon, state }, i) => (
      <TaskButton key={i} $active={state === "active"}>
        <Icon />
        {state && <Indicator $active={state === "active"} />}
      </TaskButton>
    ))}
    <IconBox $ml={164}><Line sw={2.400}><path d="M6 20L16 10.500 26 20" /></Line></IconBox>
    <IconBox $ml={32}>
      <svg width="32" height="32" viewBox="0 0 32 32"><defs><clipPath id="cl"><path d="M8 27a7 7 0 0 1-2-13.500A10.500 10.500 0 0 1 25.500 13 7 7 0 0 1 24 27z" /></clipPath></defs>
        <g clipPath="url(#cl)"><rect width="32" height="32" fill="#858585" /><path d="M0 12l6 2 10 6 5-3 4-4 7 3v14H0z" fill="#b0b0b0" /><path d="M2 25l17-8 13 9v4H2z" fill="#e8e8e8" /></g>
        <path d="M8 27a7 7 0 0 1-2-13.500A10.500 10.500 0 0 1 25.500 13 7 7 0 0 1 24 27z" fill="none" stroke="#000" strokeWidth="2.200" /></svg>
    </IconBox>
    <IconBox $ml={31}><svg width="30" height="30" viewBox="0 0 30 30"><circle cx="15" cy="15" r="15" fill="#1a1a1a" /><path d="M9 9l12 12M21 9L9 21" stroke="#fff" strokeWidth="2.600" /></svg></IconBox>
    <IconBox $ml={33}>
      <Line sw={2.200}><path d="M1 12a21 21 0 0 1 30 0" stroke="#bcc5cf" /><path d="M5 16.500a15.500 15.500 0 0 1 22 0M9.500 21a9 9 0 0 1 13 0" /><circle cx="16" cy="25" r="2.200" fill="currentColor" stroke="none" /></Line>
    </IconBox>
    <IconBox $ml={15}><Line><path d="M2 11.500h5l6-6v21l-6-6H2zM20.500 11l10 10M30.500 11l-10 10" /></Line></IconBox>
    <IconBox $w={36} $ml={16}>
      <Line w={36} h={32}><path d="M12 7h12a4 4 0 0 1 4 4v11a4 4 0 0 1-4 4H6a4 4 0 0 1-4-4v-6" /><path d="M29 13h2.500a1 1 0 0 1 1 1v4a1 1 0 0 1-1 1H29z" fill="currentColor" /><path d="M12 12h10v9H6.500V17L10 15z" fill="currentColor" /><path d="M7 0L2 10h3.500L4 18 11 8H7.500L9 0z" fill="currentColor" stroke="#e3eef8" strokeWidth="1" /></Line>
    </IconBox>
    <Clock><Fit w={44}>0:52</Fit><Fit w={121}>2024/01/16</Fit></Clock>
    <IconBox $w={28} $ml={17}><svg width="28" height="32" viewBox="0 0 28 32"><path d="M14 1c6.500 0 11 4.500 11 11v7l3 5v1H0v-1l3-5v-7C3 5.500 7.500 1 14 1zM9 27h10q-1.500 4-5 4t-5-4z" fill="#003e92" /></svg></IconBox>
  </TaskBar>
);

export default function App() {
  return (
    <>
      <Global />
      <Screen>
        <Tabs />
        <Address />
        <Bookmarks />
        <PdfViewer />
        <Taskbar />
      </Screen>
    </>
  );
}
